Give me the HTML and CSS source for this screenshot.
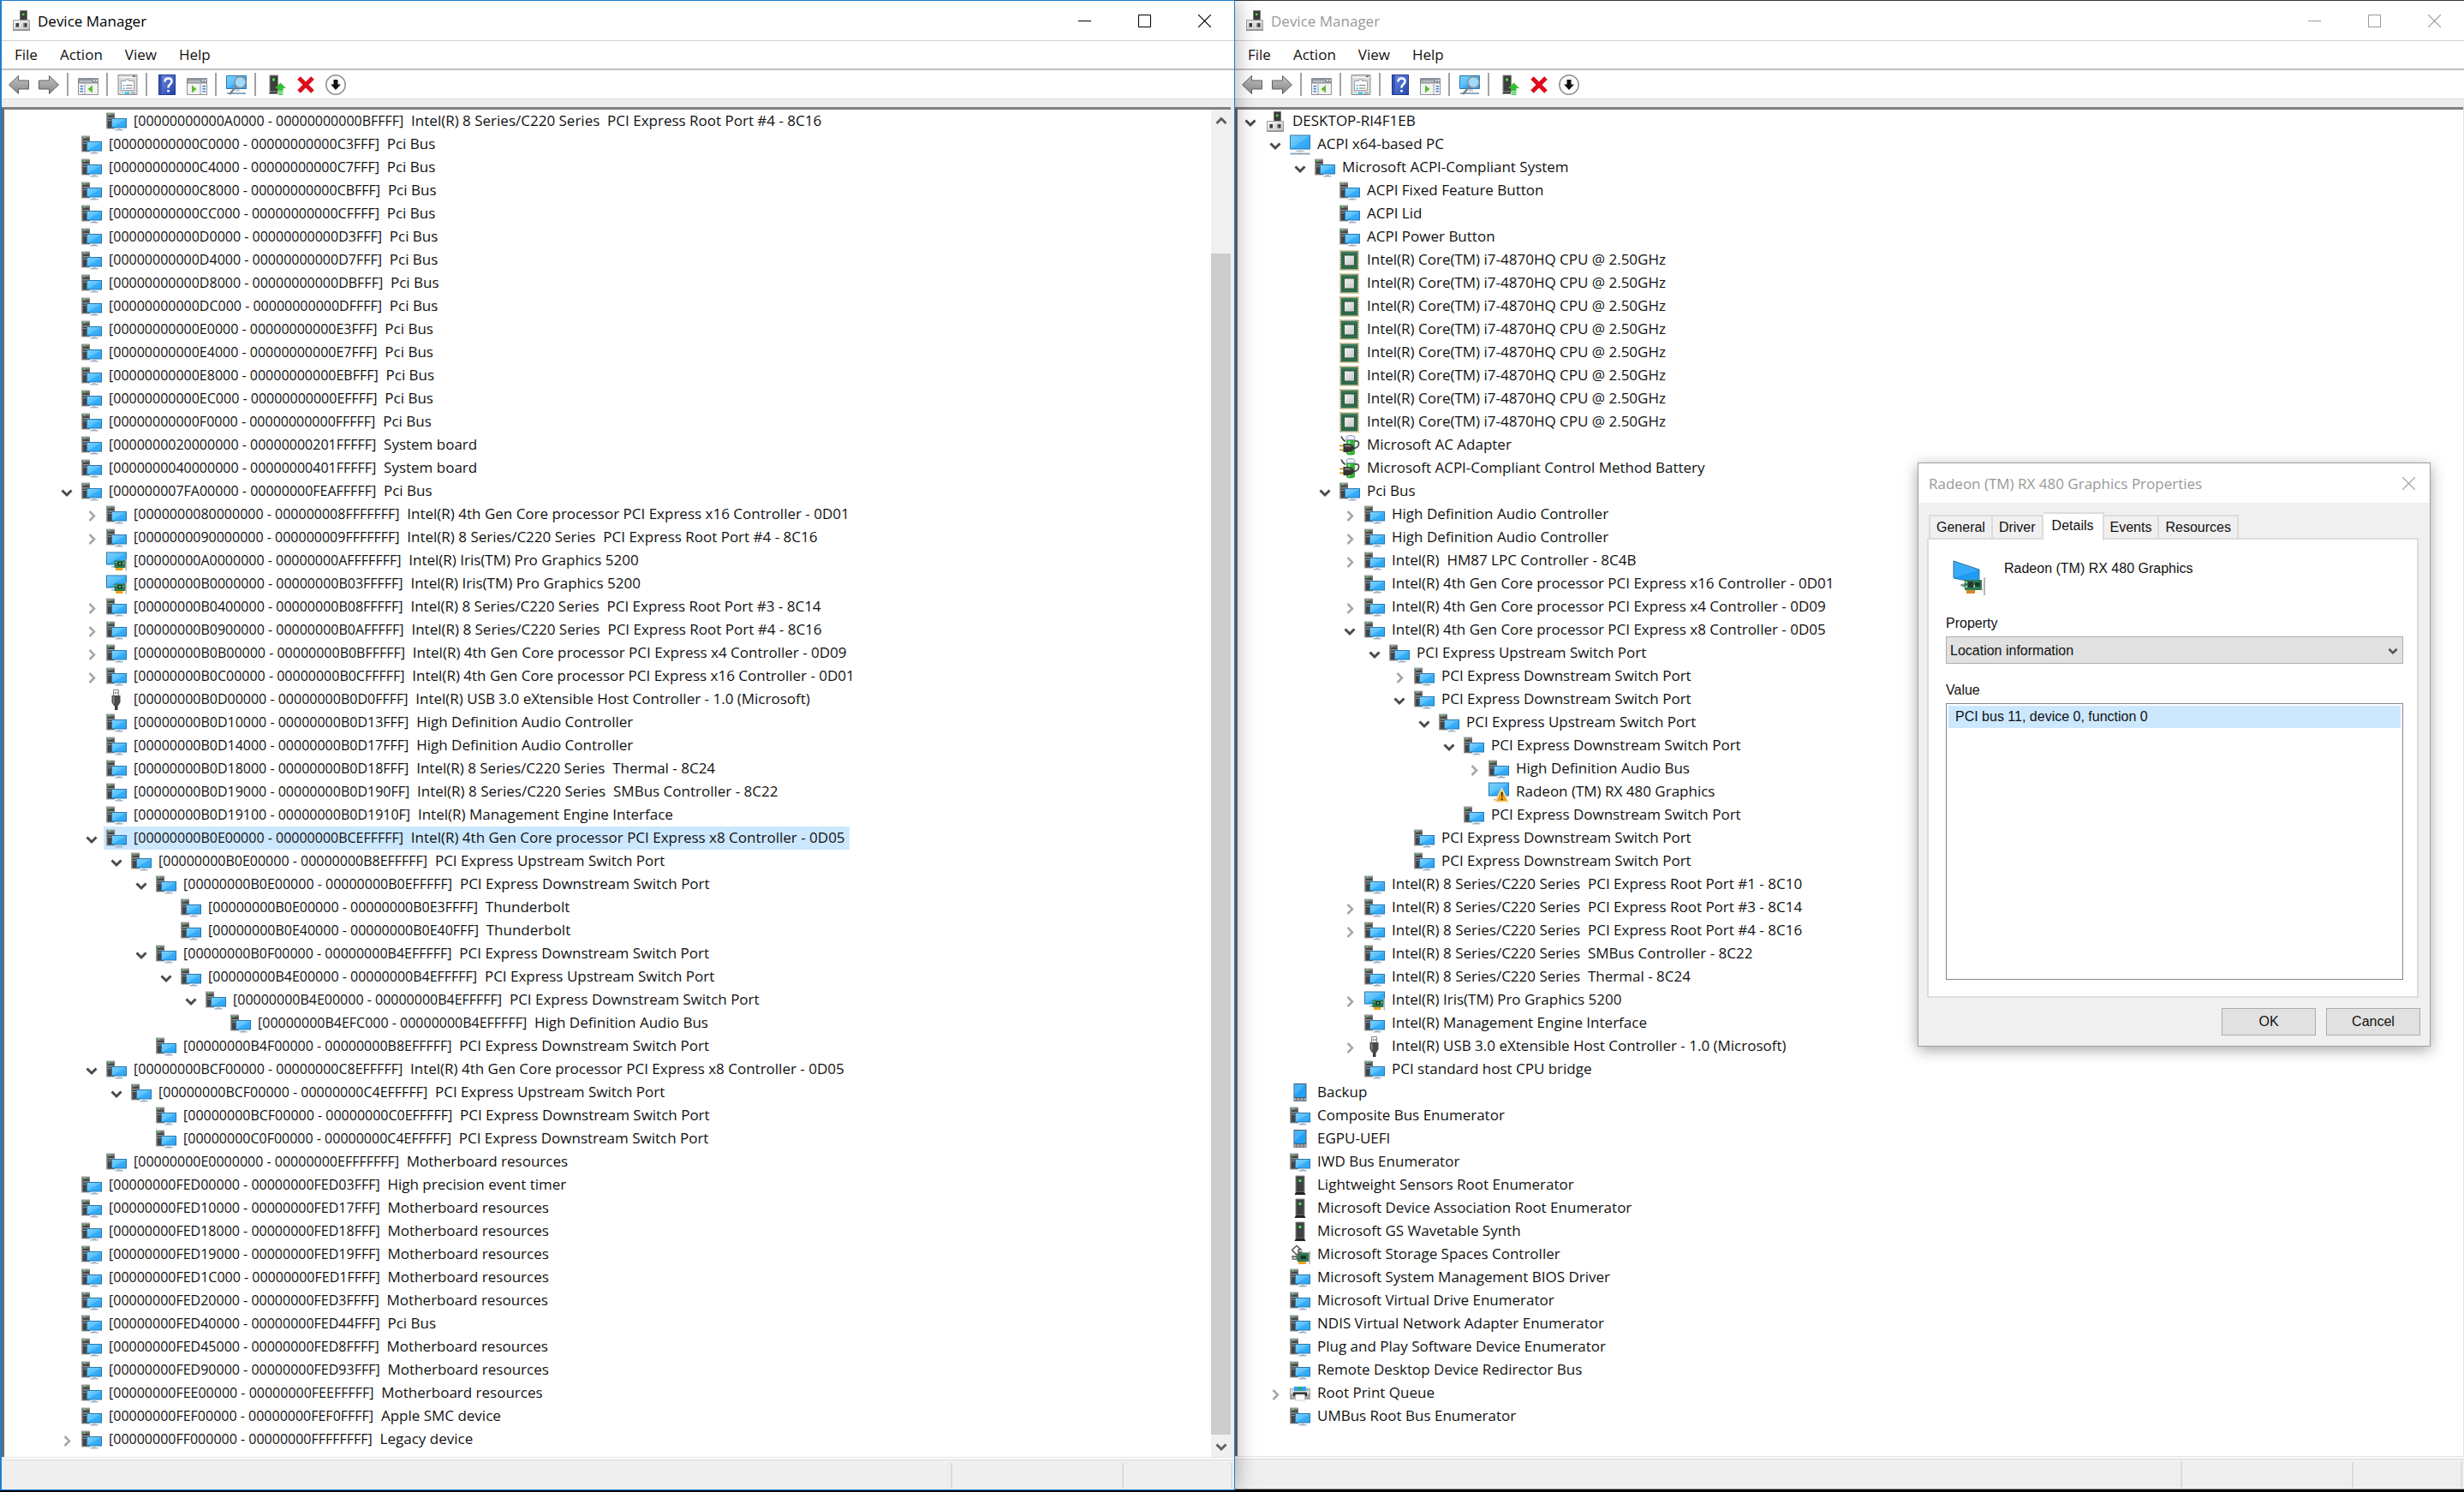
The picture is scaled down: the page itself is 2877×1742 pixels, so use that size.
FILE: index.html
```html
<!DOCTYPE html>
<html lang="en">
<head>
    <meta charset="UTF-8">
    <meta name="viewport" content="width=device-width, initial-scale=1.0">
    <title>Device Manager</title>
    <link rel="stylesheet" href="styles.css">
</head>
<body>
    <svg class="sprite" aria-hidden="true">
        <defs>
            <linearGradient id="screen" x1="0" y1="0" x2="1" y2="1">
                <stop offset="0" stop-color="#7fd0fb"/>
                <stop offset="0.5" stop-color="#56bffc"/>
                <stop offset="0.52" stop-color="#38affb"/>
                <stop offset="1" stop-color="#2aa4f6"/>
            </linearGradient>
            <linearGradient id="metal" x1="0" y1="0" x2="1" y2="1">
                <stop offset="0" stop-color="#f4f4f4"/>
                <stop offset="1" stop-color="#c4c4c4"/>
            </linearGradient>
            <linearGradient id="arrow" x1="0" y1="0" x2="0" y2="1">
                <stop offset="0" stop-color="#c4c4c4"/>
                <stop offset="1" stop-color="#858585"/>
            </linearGradient>
            <linearGradient id="book" x1="0" y1="0" x2="1" y2="1">
                <stop offset="0" stop-color="#6d8fe8"/>
                <stop offset="1" stop-color="#2444a8"/>
            </linearGradient>
        </defs>
        <symbol id="i-manager" viewBox="0 0 24 24">
            <path d="M10.500 0.500h8v11h-8z" fill="#3c3c3c" stroke="#777"/>
            <path d="M13 3.500h2.500v2.500h-2.500z" fill="#3fdc3f"/>
            <path d="M2.500 11.500h19v11.500h-19z" fill="url(#metal)" stroke="#9a9ca2"/>
            <path d="M2 22.500h20v1.500h-20z" fill="#8d8f96"/>
            <path d="M5 15h4v4.500h-4zM14.500 15h4v4.500h-4z" fill="#3b3b3b"/>
            <path d="M5 15h1v4.500h-1zM14.500 15h1v4.500h-1z" fill="#999"/>
        </symbol>
        <symbol id="i-bus" viewBox="0 0 24 24">
            <path d="M0 1.500h10v19h-10z" fill="#9b9b9b"/>
            <path d="M1.500 3h8v16.500h-8z" fill="#454545"/>
            <path d="M1.500 3h8v2h-8z" fill="#6e6e6e"/>
            <path d="M2 7h7v1.500h-7zM2 10h7v1h-7z" fill="#8f8f8f"/>
            <path d="M2.500 3h2v1.500h-2z" fill="#49e049"/>
            <path d="M6 8h18v11.500h-18z" fill="#2878ad"/>
            <path d="M7 9h16v9.500h-16z" fill="url(#screen)"/>
            <path d="M13 19.500h4v1.500h-4z" fill="#b9c9d6"/>
            <path d="M10.500 21h9v1.500h-9z" fill="#9fb3c8"/>
        </symbol>
        <symbol id="i-pc" viewBox="0 0 24 24">
            <path d="M0 0.500h24v17h-24z" fill="#2878ad"/>
            <path d="M1 1.500h22v15h-22z" fill="url(#screen)"/>
            <path d="M10 17.500h4v3h-4z" fill="#c5d0da"/>
            <path d="M7 19h10v1h-10z" fill="#a8b6c4"/>
            <path d="M1 21.500h22l1 2h-24z" fill="#8ea6bd"/>
        </symbol>
        <symbol id="i-gpu" viewBox="0 0 24 24">
            <path d="M0 1.500h24v15h-24z" fill="#2878ad"/>
            <path d="M1 2.500h22v13h-22z" fill="url(#screen)"/>
            <path d="M6 18h5v1.500h-5z" fill="#a8b6c4"/>
            <path d="M9.500 11.500h13v8.500h-13z" fill="#2b7a4c"/>
            <path d="M13.500 13h5v4.500h-5z" fill="#1d3a2a"/>
            <path d="M10.500 13h2v1h-2zM19.500 14h2v1h-2zM15 14.500h2v1.500h-2z" fill="#8fd0a4"/>
            <path d="M11 20h8.500v3h-8.500z" fill="#f0a21c"/>
            <path d="M22.500 10h1.500v13.500h-1.500z" fill="#b4b4b4"/>
        </symbol>
        <symbol id="i-gpu-warn" viewBox="0 0 24 24">
            <path d="M0 0.500h24v16h-24z" fill="#2878ad"/>
            <path d="M1 1.500h22v14h-22z" fill="url(#screen)"/>
            <path d="M6 20h3v1.500h-3z" fill="#a8b6c4"/>
            <path d="M15.500 7.500l7.500 15.500h-15z" fill="#eba320" stroke="#fbe3a6" stroke-width="1.500" stroke-linejoin="round"/>
            <path d="M14.700 12h2l-0.500 6h-1zM14.700 19.300h2v2h-2z" fill="#3d2b00"/>
        </symbol>
        <symbol id="i-usb" viewBox="0 0 24 24">
            <path d="M8.500 0.500h6v7h-6z" fill="#f2f2f2" stroke="#888"/>
            <path d="M10 3h1v2h-1zM12.500 3h1v2h-1z" fill="#555"/>
            <path d="M6.500 7h10v8l-2.500 4h-5l-2.500-4z" fill="#4a4a4a"/>
            <path d="M8 8h1.500v8h-1.500z" fill="#8a8a8a"/>
            <path d="M10 19h3.500v5h-3.500z" fill="#3a3a3a"/>
        </symbol>
        <symbol id="i-cpu" viewBox="0 0 24 24">
            <path d="M0.700 0.700h21.600v22.600h-21.600z" fill="#fff" stroke="#c79a45" stroke-width="1.400" stroke-dasharray="1 1"/>
            <path d="M1.500 1.500h20v21h-20z" fill="#2f6a4b"/>
            <path d="M2.500 2.500h18v1h-18z" fill="#4b8a68"/>
            <path d="M5.500 6h12v12h-12z" fill="url(#metal)" stroke="#285a40"/>
        </symbol>
        <symbol id="i-battery" viewBox="0 0 24 24">
            <path d="M8 3q0-2.500 5-2.500t5 2.500v18q0 2.500-5 2.500t-5-2.500z" fill="#35b13c"/>
            <path d="M8 3q0-2.500 5-2.500t5 2.500v2.500h-10z" fill="#eaf0fb" stroke="#7e88b8" stroke-width="0.800"/>
            <path d="M10 7h2.500v14h-2.500z" fill="#8fe48f"/>
            <path d="M2 1.500q1.500 4 5 6M18 7q5-1 4.500 3.500t-6 5" fill="none" stroke="#4a4a4a" stroke-width="1.800"/>
            <path d="M0 11.500h5v1.800h-5zM0 16.500h5v1.800h-5z" fill="#c99b1c"/>
            <path d="M4.500 10h5.500q6 0.500 7.500 5q-1.500 4.500-7.500 5h-5.500z" fill="#333"/>
            <path d="M6 11.500h4q3 0.300 4.500 2h-8.500z" fill="#8a8a8a"/>
        </symbol>
        <symbol id="i-tower" viewBox="0 0 24 24">
            <path d="M7 1h10v19h-10z" fill="#3f3f3f" stroke="#8b8b8b"/>
            <path d="M10.500 5h3v3h-3z" fill="#46e346"/>
            <path d="M7 20h10l1.500 3h-13z" fill="#222"/>
        </symbol>
        <symbol id="i-portable" viewBox="0 0 24 24">
            <path d="M4.500 1h15v21h-15z" fill="#4d5a66"/>
            <path d="M5.500 2h13v15h-13z" fill="#23a0f8"/>
            <path d="M5.500 2h13l-13 13z" fill="#46b3fb"/>
            <path d="M5 18h14v3.500h-14z" fill="#a3a9ae"/>
            <path d="M7.500 18h1v3.500h-1zM11.500 18h1v3.500h-1zM15.500 18h1v3.500h-1z" fill="#5b6066"/>
        </symbol>
        <symbol id="i-storage" viewBox="0 0 24 24">
            <path d="M8 1.500l5 4.500h-3v3h3l-5 3-5.500-5.500z" fill="#fff" stroke="#555" stroke-width="1.500"/>
            <path d="M2 13h7l2 5h-8z" fill="#777"/>
            <path d="M4 15h3v1.500h-3z" fill="#ddd"/>
            <path d="M9 12l4-2.500h9.500v10.500h-14z" fill="#2f7450"/>
            <path d="M13 13h6v4h-6z" fill="#173526"/>
            <path d="M10 20h9v3h-9z" fill="#f0a21c"/>
            <path d="M22.500 8h1.500v14.500h-1.500z" fill="#aaa"/>
        </symbol>
        <symbol id="i-printer" viewBox="0 0 24 24">
            <path d="M5 4h14l1 5h-16z" fill="#2fa0ee"/>
            <path d="M10 4h4v5h-4z" fill="#27b06a"/>
            <path d="M0 6h4l1 3h14l1-3h4v13h-24z" fill="#a5a5a5"/>
            <path d="M1 7h3l1 2h14l1-2h3v5h-22z" fill="#dedede"/>
            <path d="M20 7.500h2v1.200h-2z" fill="#35c435"/>
            <path d="M4 10.500h16v4.500h-16z" fill="#2f2f2f"/>
            <path d="M6.500 13h11v7h-11z" fill="#fff" stroke="#999" stroke-width="0.500"/>
        </symbol>
        <symbol id="i-card" viewBox="0 0 40 42">
            <path d="M1 1l30 10v16l-30-6z" fill="#36abfa" stroke="#3b6e92"/>
            <path d="M1.500 20.500l29-9v15z" fill="#209af3"/>
            <path d="M8 29l6-2v5z" fill="#8a8a8a"/>
            <path d="M14 23h20v12h-20z" fill="#2e7d57"/>
            <path d="M18 25h6v7h-6zM26 26h6v5h-6z" fill="#26372e"/>
            <path d="M15 25h2v2h-2zM15 30h2v2h-2zM24.500 29h1.500v3h-1.500z" fill="#a4dcb8"/>
            <path d="M16 35h10v4h-10z" fill="#d98a2b"/>
            <path d="M33 33l2 4v-5zM36 21l3-1-1 2v19h-2z" fill="#b5b5b5"/>
        </symbol>
        <symbol id="i-back" viewBox="0 0 24 24">
            <path d="M0.500 12l11-10.500v5.500h12v10h-12v5.500z" fill="url(#arrow)" stroke="#5f5f5f" stroke-linejoin="round"/>
        </symbol>
        <symbol id="i-forward" viewBox="0 0 24 24">
            <path d="M23.500 12l-11-10.500v5.500h-12v10h12v5.500z" fill="url(#arrow)" stroke="#5f5f5f" stroke-linejoin="round"/>
        </symbol>
        <symbol id="i-console" viewBox="0 0 24 24">
            <path d="M0.500 4.500h23v19h-23z" fill="#f3f3f3" stroke="#8c9096"/>
            <path d="M1 5h22v5.500h-22z" fill="#8d949b"/>
            <path d="M2 7.500h14v1h-14zM18 6h1.500v2h-1.500zM21 6h1.500v2h-1.500z" fill="#e6e9ec"/>
            <path d="M7.500 11h1v12h-1z" fill="#9a9fa5"/>
            <path d="M2.500 13h3.500v1.500h-3.500zM2.500 16h3.500v1.500h-3.500zM2.500 19h3.500v1.500h-3.500z" fill="#3f87cf"/>
            <path d="M17 12.500v9l-5.500-4.500z" fill="#5dbb35"/>
        </symbol>
        <symbol id="i-action" viewBox="0 0 24 24">
            <path d="M0.500 4.500h23v19h-23z" fill="#f3f3f3" stroke="#8c9096"/>
            <path d="M1 5h22v5.500h-22z" fill="#8d949b"/>
            <path d="M2 7.500h14v1h-14zM18 6h1.500v2h-1.500zM21 6h1.500v2h-1.500z" fill="#e6e9ec"/>
            <path d="M15.500 11h1v12h-1z" fill="#9a9fa5"/>
            <path d="M18.500 13h3.500v1.500h-3.500zM18.500 16h3.500v1.500h-3.500zM18.500 19h3.500v1.500h-3.500z" fill="#3f87cf"/>
            <path d="M6 12.500v9l5.500-4.500z" fill="#5dbb35"/>
        </symbol>
        <symbol id="i-properties" viewBox="0 0 24 24">
            <path d="M1 0.500h22v23h-22z" fill="#d9dbdd" stroke="#8b8f93"/>
            <path d="M2 3h20v1h-20z" fill="#fff"/>
            <path d="M18 1.500h3v1.500h-3z" fill="#555"/>
            <path d="M4.500 7.500h5v-1.500h4v1.500h6v11h-15z" fill="#fff" stroke="#9aa0a6"/>
            <path d="M6.500 12h2v1.500h-2z" fill="#33a7e8"/>
            <path d="M6.500 15.500h2v1.500h-2z" fill="#33a7e8"/>
            <path d="M10 12h7.500v1h-7.500zM10 15.500h7.500v1h-7.500z" fill="#777"/>
            <path d="M9 20.500h5v2.500h-5z" fill="#37c5f3"/>
            <path d="M16 20.500h5v2.500h-5z" fill="#b3b6b9"/>
        </symbol>
        <symbol id="i-help" viewBox="0 0 24 24">
            <path d="M2 0h20v24h-20z" fill="#23398c"/>
            <path d="M3 1h18v22h-18z" fill="url(#book)"/>
            <path d="M3 1h3v22h-3z" fill="#3552b5"/>
            <path d="M9.500 8.500q0-4 4-4t4 3.500q0 2-2 3.500t-2 4M13.500 18v2.500" fill="none" stroke="#fff" stroke-width="2.500"/>
        </symbol>
        <symbol id="i-scan" viewBox="0 0 24 24">
            <path d="M0.500 1.500h23v15h-23z" fill="url(#screen)" stroke="#2878ad"/>
            <path d="M1 21h22v2h-22z" fill="#8fa8c0"/>
            <path d="M11 17h5v3h-5z" fill="#c8d4de"/>
            <circle cx="16.500" cy="9" r="6.500" fill="#9fdcf9" stroke="#8b9299" stroke-width="1.500"/>
            <path d="M12 14l-8 9" stroke="#7c8085" stroke-width="2.500"/>
        </symbol>
        <symbol id="i-update" viewBox="0 0 24 24">
            <path d="M5 1h9.500v19h-9.500z" fill="#3f3f3f" stroke="#8b8b8b"/>
            <path d="M8 4.500h3v3h-3z" fill="#46e346"/>
            <path d="M5 20.500h9v2h-10z" fill="#222"/>
            <path d="M17.500 9.500l6.500 6.500h-3.500v3h-6v-3h-3.500z" fill="#2fc12f"/>
            <path d="M14.500 19.800h6v1.500h-6zM14.500 22.300h6v1.500h-6z" fill="#2fc12f"/>
        </symbol>
        <symbol id="i-delete" viewBox="0 0 24 24">
            <path d="M4 4l16 16M20 4l-16 16" stroke="#de0d1b" stroke-width="5"/>
        </symbol>
        <symbol id="i-disable" viewBox="0 0 24 24">
            <circle cx="12" cy="12" r="11.200" fill="#fff" stroke="#8f8f8f" stroke-width="1.500"/>
            <path d="M9.500 6h5v5.500h3.500l-6 6.500-6-6.500h3.500z" fill="#111"/>
        </symbol>
        <symbol id="i-down" viewBox="0 0 24 24"><path d="M6.500 10.500l5.500 5.500 5.500-5.500" fill="none" stroke="currentColor" stroke-width="3"/></symbol>
        <symbol id="i-up" viewBox="0 0 24 24"><path d="M6.500 15l5.500-5.500 5.500 5.500" fill="none" stroke="currentColor" stroke-width="3"/></symbol>
        <symbol id="i-right" viewBox="0 0 24 24"><path d="M9.500 8l5.500 5.500-5.500 5.500" fill="none" stroke="currentColor" stroke-width="2.500"/></symbol>
        <symbol id="i-min" viewBox="0 0 15 15"><path d="M0 7.500h15" stroke="currentColor"/></symbol>
        <symbol id="i-max" viewBox="0 0 15 15"><path d="M0.500 0.500h14v14h-14z" fill="none" stroke="currentColor"/></symbol>
        <symbol id="i-close" viewBox="0 0 15 15"><path d="M0 0l15 15M15 0l-15 15" stroke="currentColor" stroke-width="1.200"/></symbol>
    </svg>

    <main class="desktop">
        <section class="window active">
            <header class="titlebar">
                <svg class="icon"><use href="#i-manager"/></svg>
                <h1>Device Manager</h1>
                <button class="caption" aria-label="Minimize"><svg><use href="#i-min"/></svg></button>
                <button class="caption" aria-label="Maximize"><svg><use href="#i-max"/></svg></button>
                <button class="caption" aria-label="Close"><svg><use href="#i-close"/></svg></button>
            </header>
            <nav class="menubar">
                <button>File</button><button>Action</button><button>View</button><button>Help</button>
            </nav>
            <div class="toolbar"></div>
            <div class="pane">
                <ul class="tree" id="resources" role="tree"></ul>
                <div class="scrollbar">
                    <button aria-label="Scroll up"><svg class="icon"><use href="#i-up"/></svg></button>
                    <div class="track"><div class="thumb"></div></div>
                    <button aria-label="Scroll down"><svg class="icon"><use href="#i-down"/></svg></button>
                </div>
            </div>
            <footer class="statusbar"><span></span><span></span><span></span></footer>
        </section>

        <section class="window">
            <header class="titlebar">
                <svg class="icon"><use href="#i-manager"/></svg>
                <h1>Device Manager</h1>
                <button class="caption" aria-label="Minimize"><svg><use href="#i-min"/></svg></button>
                <button class="caption" aria-label="Maximize"><svg><use href="#i-max"/></svg></button>
                <button class="caption" aria-label="Close"><svg><use href="#i-close"/></svg></button>
            </header>
            <nav class="menubar">
                <button>File</button><button>Action</button><button>View</button><button>Help</button>
            </nav>
            <div class="toolbar"></div>
            <div class="pane">
                <ul class="tree" id="devices" role="tree"></ul>
            </div>
            <footer class="statusbar"><span></span><span></span><span></span></footer>
        </section>

        <section class="dialog" role="dialog" aria-labelledby="dialog-title">
            <header class="titlebar">
                <h2 id="dialog-title">Radeon (TM) RX 480 Graphics Properties</h2>
                <button class="caption" aria-label="Close"><svg><use href="#i-close"/></svg></button>
            </header>
            <div class="dialog-body">
                <div class="tabs" role="tablist">
                    <button role="tab">General</button>
                    <button role="tab">Driver</button>
                    <button role="tab" class="current" aria-selected="true">Details</button>
                    <button role="tab">Events</button>
                    <button role="tab">Resources</button>
                </div>
                <div class="panel">
                    <div class="device">
                        <svg><use href="#i-card"/></svg>
                        <p>Radeon (TM) RX 480 Graphics</p>
                    </div>
                    <label for="property">Property</label>
                    <div class="combo">
                        <select id="property"><option>Location information</option></select>
                        <svg><use href="#i-down"/></svg>
                    </div>
                    <label id="value-label">Value</label>
                    <ul class="values" role="listbox" aria-labelledby="value-label">
                        <li role="option" aria-selected="true">PCI bus 11, device 0, function 0</li>
                    </ul>
                </div>
                <div class="actions">
                    <button>OK</button>
                    <button>Cancel</button>
                </div>
            </div>
        </section>
    </main>

    <script src="script.js"></script>
</body>
</html>
```
FILE: styles.css
```css
* {
    box-sizing: border-box;
}

body {
    margin: 0;
    font-family: 'Open Sans', 'Noto Sans', sans-serif;
    font-size: 17px;
    color: #111;
    background: #000;
}

h1, h2, p, ul {
    margin: 0;
    padding: 0;
    font-size: inherit;
    font-weight: normal;
    list-style: none;
}

button {
    display: flex;
    align-items: center;
    justify-content: center;
    padding: 0;
    border: 0;
    background: none;
    font: inherit;
    color: inherit;
}

.sprite {
    position: absolute;
    width: 0;
    height: 0;
}

.icon {
    flex: none;
    width: 24px;
    height: 24px;
}

.desktop {
    position: relative;
    display: grid;
    grid-template-columns: 1442fr 1435fr;
    min-height: 100vh;
    padding-bottom: 2px;
}

/* windows */
.window {
    display: flex;
    flex-direction: column;
    min-width: 0;
    margin-bottom: 1px;
    background: #fff;
    border-top: 1px solid #333;
    border-bottom: 1px solid #999;
}

.window.active {
    z-index: 1;
    margin: 0;
    border: 1px solid #1e7fd0;
    border-left-width: 2px;
    box-shadow: 0 0 24px rgba(0, 0, 0, 0.35);
}

.titlebar {
    display: flex;
    align-items: center;
    height: 47px;
    padding-left: 11px;
    border-bottom: 1px solid #cfcfcf;
    color: #999;
}

.titlebar .icon {
    margin-right: 7px;
}

.titlebar h1, .titlebar h2 {
    flex: 1;
    white-space: nowrap;
}

.active .titlebar {
    color: #000;
}

.caption {
    width: 70px;
    height: 46px;
}

.caption svg {
    width: 15px;
    height: 15px;
}

.menubar {
    display: flex;
    height: 34px;
    padding-left: 2px;
    border-bottom: 2px solid #c0c0c0;
}

.menubar button {
    padding: 0 13px 2px;
}

.toolbar {
    display: flex;
    align-items: center;
    height: 34px;
    padding-left: 2px;
    border-bottom: 1px solid #dcdcdc;
}

.toolbar button {
    width: 35px;
    height: 34px;
}

.toolbar hr {
    width: 2px;
    height: 27px;
    margin: 0 5px 0 4px;
    border: 0;
    background: #a3a3a3;
}

.pane {
    flex: 1;
    display: flex;
    border-top: 9px solid #eee;
    border-right: 1px solid #e3e3e3;
    border-bottom: 1px solid #e3e3e3;
}

.active .pane {
    border-right: 4px solid #eee;
}

/* device tree */
.tree {
    flex: 1;
    padding: 0 0 0 1px;
    border-top: 3px solid #808080;
    border-left: 3px solid #6b6b6b;
}

.tree li {
    display: flex;
    height: 27px;
    padding-left: calc(var(--level) * 29px);
    line-height: 25px;
    white-space: pre;
}

.twisty {
    flex: none;
    width: 28px;
    color: #4a4a4a;
}

.twisty.closed {
    color: #a6a6a6;
}

.node {
    display: flex;
    align-items: center;
    gap: 8px;
    padding: 0 5px 0 3px;
}

.node.selected {
    background: #cce8ff;
}

.label {
    padding-bottom: 2px;
}

.range {
    font-size: 16px;
}

.scrollbar {
    display: flex;
    flex-direction: column;
    width: 23px;
    border-top: 3px solid #808080;
    background: #f0f0f0;
    color: #606060;
}

.scrollbar button {
    height: 26px;
}

.track {
    flex: 1;
    display: flex;
    flex-direction: column;
    justify-content: flex-end;
}

.thumb {
    height: calc(100% - 142px);
    background: #cdcdcd;
}

.statusbar {
    display: flex;
    height: 37px;
    padding: 4px 2px 1px 0;
    border-top: 2px solid #fff;
    background: linear-gradient(#dadada 1px, #efefef 1px);
}

.statusbar span {
    width: 127px;
    border-right: 2px solid #dcdcdc;
}

.statusbar span:first-child {
    flex: 1;
}

.statusbar span:nth-child(2) {
    width: 200px;
}

/* properties dialog */
.dialog {
    position: absolute;
    top: 540px;
    right: 39px;
    z-index: 2;
    width: 599px;
    border: 1px solid #a0a0a0;
    background: #f0f0f0;
    box-shadow: 0 4px 16px rgba(0, 0, 0, 0.35);
}

.dialog .titlebar {
    height: 46px;
    border: 0;
    padding-left: 12px;
    background: #fff;
}

.dialog .caption {
    width: 50px;
}

.dialog-body {
    padding: 11px 13px 12px 10px;
    font-family: 'Liberation Sans', Arial, sans-serif;
    font-size: 16px;
}

.tabs {
    display: flex;
    align-items: flex-end;
    height: 31px;
    padding-left: 2px;
}

.tabs button {
    height: 28px;
    padding: 0 7px;
    border: 2px solid #dcdcdc;
    border-width: 2px 2px 0 0;
}

.tabs button:first-child {
    border-left-width: 2px;
}

.tabs .current {
    z-index: 1;
    height: 33px;
    margin-bottom: -2px;
    padding: 0 10px 4px;
    background: #fff;
}

.panel {
    margin-top: -1px;
    padding: 24px 16px 19px 20px;
    border: 2px solid #dcdcdc;
    background: #fff;
}

.device {
    display: flex;
    gap: 20px;
    height: 64px;
    padding-left: 8px;
}

.device svg {
    width: 40px;
    height: 42px;
}

.device p {
    line-height: 20px;
}

.panel label {
    display: block;
    height: 25px;
    line-height: 20px;
}

.combo {
    position: relative;
    margin-bottom: 21px;
}

.combo select {
    display: block;
    width: 100%;
    height: 32px;
    padding: 0 4px;
    appearance: none;
    border: 1px solid #adadad;
    border-radius: 0;
    background: #e1e1e1;
    font: inherit;
    color: inherit;
}

.combo svg {
    position: absolute;
    top: 6px;
    right: 2px;
    width: 20px;
    height: 20px;
    color: #555;
}

.values {
    height: 323px;
    padding: 2px;
    border: 1px solid #828790;
}

.values li {
    padding-left: 8px;
    line-height: 26px;
    background: #cce8ff;
}

.actions {
    display: flex;
    justify-content: flex-end;
    gap: 12px;
    margin: 12px -2px 0 0;
}

.actions button {
    width: 110px;
    height: 32px;
    border: 1px solid #adadad;
    background: #e1e1e1;
}
```
FILE: script.js
```js
// level, icon, state (v open, > closed, . leaf, * open and selected), text
const resources = `
3 bus . A0000-BFFFF Intel(R) 8 Series/C220 Series  PCI Express Root Port #4 - 8C16
2 bus . C0000-C3FFF Pci Bus
2 bus . C4000-C7FFF Pci Bus
2 bus . C8000-CBFFF Pci Bus
2 bus . CC000-CFFFF Pci Bus
2 bus . D0000-D3FFF Pci Bus
2 bus . D4000-D7FFF Pci Bus
2 bus . D8000-DBFFF Pci Bus
2 bus . DC000-DFFFF Pci Bus
2 bus . E0000-E3FFF Pci Bus
2 bus . E4000-E7FFF Pci Bus
2 bus . E8000-EBFFF Pci Bus
2 bus . EC000-EFFFF Pci Bus
2 bus . F0000-FFFFF Pci Bus
2 bus . 20000000-201FFFFF System board
2 bus . 40000000-401FFFFF System board
2 bus v 7FA00000-FEAFFFFF Pci Bus
3 bus > 80000000-8FFFFFFF Intel(R) 4th Gen Core processor PCI Express x16 Controller - 0D01
3 bus > 90000000-9FFFFFFF Intel(R) 8 Series/C220 Series  PCI Express Root Port #4 - 8C16
3 gpu . A0000000-AFFFFFFF Intel(R) Iris(TM) Pro Graphics 5200
3 gpu . B0000000-B03FFFFF Intel(R) Iris(TM) Pro Graphics 5200
3 bus > B0400000-B08FFFFF Intel(R) 8 Series/C220 Series  PCI Express Root Port #3 - 8C14
3 bus > B0900000-B0AFFFFF Intel(R) 8 Series/C220 Series  PCI Express Root Port #4 - 8C16
3 bus > B0B00000-B0BFFFFF Intel(R) 4th Gen Core processor PCI Express x4 Controller - 0D09
3 bus > B0C00000-B0CFFFFF Intel(R) 4th Gen Core processor PCI Express x16 Controller - 0D01
3 usb . B0D00000-B0D0FFFF Intel(R) USB 3.0 eXtensible Host Controller - 1.0 (Microsoft)
3 bus . B0D10000-B0D13FFF High Definition Audio Controller
3 bus . B0D14000-B0D17FFF High Definition Audio Controller
3 bus . B0D18000-B0D18FFF Intel(R) 8 Series/C220 Series  Thermal - 8C24
3 bus . B0D19000-B0D190FF Intel(R) 8 Series/C220 Series  SMBus Controller - 8C22
3 bus . B0D19100-B0D1910F Intel(R) Management Engine Interface
3 bus * B0E00000-BCEFFFFF Intel(R) 4th Gen Core processor PCI Express x8 Controller - 0D05
4 bus v B0E00000-B8EFFFFF PCI Express Upstream Switch Port
5 bus v B0E00000-B0EFFFFF PCI Express Downstream Switch Port
6 bus . B0E00000-B0E3FFFF Thunderbolt
6 bus . B0E40000-B0E40FFF Thunderbolt
5 bus v B0F00000-B4EFFFFF PCI Express Downstream Switch Port
6 bus v B4E00000-B4EFFFFF PCI Express Upstream Switch Port
7 bus v B4E00000-B4EFFFFF PCI Express Downstream Switch Port
8 bus . B4EFC000-B4EFFFFF High Definition Audio Bus
5 bus . B4F00000-B8EFFFFF PCI Express Downstream Switch Port
3 bus v BCF00000-C8EFFFFF Intel(R) 4th Gen Core processor PCI Express x8 Controller - 0D05
4 bus v BCF00000-C4EFFFFF PCI Express Upstream Switch Port
5 bus . BCF00000-C0EFFFFF PCI Express Downstream Switch Port
5 bus . C0F00000-C4EFFFFF PCI Express Downstream Switch Port
3 bus . E0000000-EFFFFFFF Motherboard resources
2 bus . FED00000-FED03FFF High precision event timer
2 bus . FED10000-FED17FFF Motherboard resources
2 bus . FED18000-FED18FFF Motherboard resources
2 bus . FED19000-FED19FFF Motherboard resources
2 bus . FED1C000-FED1FFFF Motherboard resources
2 bus . FED20000-FED3FFFF Motherboard resources
2 bus . FED40000-FED44FFF Pci Bus
2 bus . FED45000-FED8FFFF Motherboard resources
2 bus . FED90000-FED93FFF Motherboard resources
2 bus . FEE00000-FEEFFFFF Motherboard resources
2 bus . FEF00000-FEF0FFFF Apple SMC device
2 bus > FF000000-FFFFFFFF Legacy device`;

const devices = `
0 manager v DESKTOP-RI4F1EB
1 pc v ACPI x64-based PC
2 bus v Microsoft ACPI-Compliant System
3 bus . ACPI Fixed Feature Button
3 bus . ACPI Lid
3 bus . ACPI Power Button
3 cpu . Intel(R) Core(TM) i7-4870HQ CPU @ 2.50GHz
3 cpu . Intel(R) Core(TM) i7-4870HQ CPU @ 2.50GHz
3 cpu . Intel(R) Core(TM) i7-4870HQ CPU @ 2.50GHz
3 cpu . Intel(R) Core(TM) i7-4870HQ CPU @ 2.50GHz
3 cpu . Intel(R) Core(TM) i7-4870HQ CPU @ 2.50GHz
3 cpu . Intel(R) Core(TM) i7-4870HQ CPU @ 2.50GHz
3 cpu . Intel(R) Core(TM) i7-4870HQ CPU @ 2.50GHz
3 cpu . Intel(R) Core(TM) i7-4870HQ CPU @ 2.50GHz
3 battery . Microsoft AC Adapter
3 battery . Microsoft ACPI-Compliant Control Method Battery
3 bus v Pci Bus
4 bus > High Definition Audio Controller
4 bus > High Definition Audio Controller
4 bus > Intel(R)  HM87 LPC Controller - 8C4B
4 bus . Intel(R) 4th Gen Core processor PCI Express x16 Controller - 0D01
4 bus > Intel(R) 4th Gen Core processor PCI Express x4 Controller - 0D09
4 bus v Intel(R) 4th Gen Core processor PCI Express x8 Controller - 0D05
5 bus v PCI Express Upstream Switch Port
6 bus > PCI Express Downstream Switch Port
6 bus v PCI Express Downstream Switch Port
7 bus v PCI Express Upstream Switch Port
8 bus v PCI Express Downstream Switch Port
9 bus > High Definition Audio Bus
9 gpu-warn . Radeon (TM) RX 480 Graphics
8 bus . PCI Express Downstream Switch Port
6 bus . PCI Express Downstream Switch Port
6 bus . PCI Express Downstream Switch Port
4 bus . Intel(R) 8 Series/C220 Series  PCI Express Root Port #1 - 8C10
4 bus > Intel(R) 8 Series/C220 Series  PCI Express Root Port #3 - 8C14
4 bus > Intel(R) 8 Series/C220 Series  PCI Express Root Port #4 - 8C16
4 bus . Intel(R) 8 Series/C220 Series  SMBus Controller - 8C22
4 bus . Intel(R) 8 Series/C220 Series  Thermal - 8C24
4 gpu > Intel(R) Iris(TM) Pro Graphics 5200
4 bus . Intel(R) Management Engine Interface
4 usb > Intel(R) USB 3.0 eXtensible Host Controller - 1.0 (Microsoft)
4 bus . PCI standard host CPU bridge
1 portable . Backup
1 bus . Composite Bus Enumerator
1 portable . EGPU-UEFI
1 bus . IWD Bus Enumerator
1 tower . Lightweight Sensors Root Enumerator
1 tower . Microsoft Device Association Root Enumerator
1 tower . Microsoft GS Wavetable Synth
1 storage . Microsoft Storage Spaces Controller
1 bus . Microsoft System Management BIOS Driver
1 bus . Microsoft Virtual Drive Enumerator
1 bus . NDIS Virtual Network Adapter Enumerator
1 bus . Plug and Play Software Device Enumerator
1 bus . Remote Desktop Device Redirector Bus
1 printer > Root Print Queue
1 bus . UMBus Root Bus Enumerator`;

const tools = [
    ['back', 'Back'], ['forward', 'Forward'], null,
    ['console', 'Show/Hide Console Tree'], null,
    ['properties', 'Properties'], null,
    ['help', 'Help'], ['action', 'Show/Hide Action Pane'], null,
    ['scan', 'Scan for hardware changes'], null,
    ['update', 'Update driver'], ['delete', 'Uninstall device'], ['disable', 'Disable device']
];

const icon = name => `<svg class="icon"><use href="#i-${name}"/></svg>`;

function twisty(state) {
    if (state === '.') return '<span class="twisty"></span>';
    if (state === '>') return `<button class="twisty closed" aria-label="Expand">${icon('right')}</button>`;
    return `<button class="twisty" aria-label="Collapse">${icon('down')}</button>`;
}

function label(text) {
    const range = text.match(/^([0-9A-F]+)-([0-9A-F]+) (.*)$/);
    if (!range) return text;
    return `<span class="range">[${range[1].padStart(16, '0')} - ${range[2].padStart(16, '0')}]</span>  ${range[3]}`;
}

function renderTree(id, data) {
    document.getElementById(id).innerHTML = data.trim().split('\n').map(line => {
        const [, level, name, state, text] = line.match(/^(\d) (\S+) (\S) (.*)$/);
        const selected = state === '*' ? ' selected' : '';
        return `<li role="treeitem" style="--level: ${level}">${twisty(state)}` +
            `<span class="node${selected}">${icon(name)}<span class="label">${label(text)}</span></span></li>`;
    }).join('');
}

renderTree('resources', resources);
renderTree('devices', devices);

document.querySelectorAll('.toolbar').forEach(bar => {
    bar.innerHTML = tools.map(tool =>
        tool ? `<button aria-label="${tool[1]}">${icon(tool[0])}</button>` : '<hr>'
    ).join('');
});
```
